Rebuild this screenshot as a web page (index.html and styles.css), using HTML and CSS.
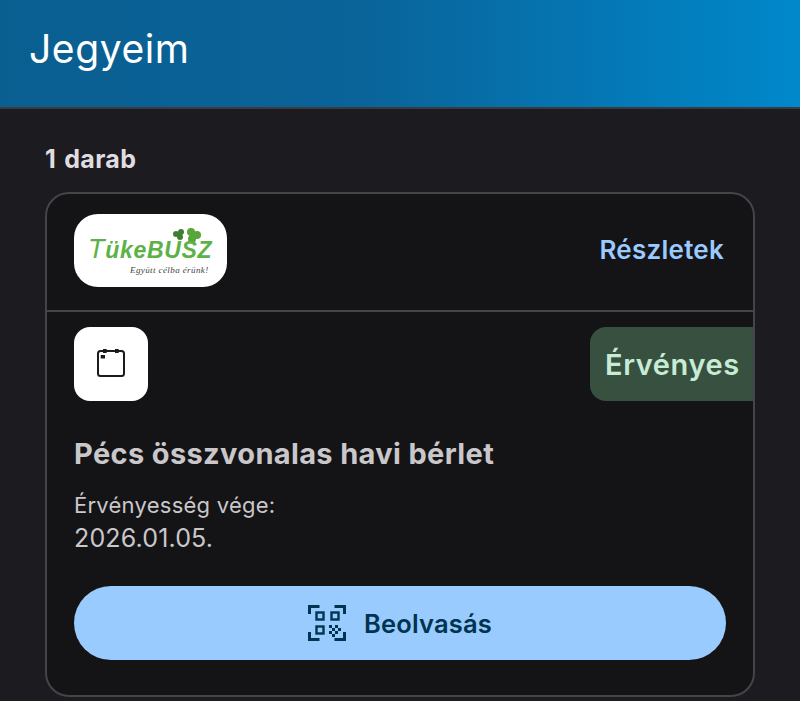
FILE: index.html
```html
<!DOCTYPE html>
<html lang="hu">
<head>
<meta charset="utf-8">
<title>Jegyeim</title>
<link rel="stylesheet" href="styles.css">
</head>
<body>
<header class="topbar"><h1 class="topbar-title">Jegyeim</h1></header>
<main class="content">
  <div class="count">1 darab</div>
  <section class="card">
    <div class="card-head">
      <div class="logo">
        <svg class="clover" viewBox="0 0 32 20" width="32" height="20">
          <g fill="#3f7d32"><circle cx="5" cy="7" r="3"/><circle cx="10" cy="5" r="3"/><circle cx="9" cy="10" r="3"/></g>
          <g fill="#58a53c"><circle cx="20" cy="5" r="4"/><circle cx="26" cy="8" r="4"/><circle cx="21" cy="12" r="4"/></g>
        </svg>
        <div class="logo-name"><span class="logo-t">T</span>ükeBUSZ</div>
        <div class="logo-tag">Együtt célba érünk!</div>
      </div>
      <a class="details">Részletek</a>
    </div>
    <div class="card-body">
      <div class="status-row">
        <div class="cal-box">
          <svg viewBox="0 0 28 30" width="28" height="30" fill="none">
            <rect x="1" y="1.900" width="26" height="25.200" rx="2.500" stroke="#1b1b1f" stroke-width="2"/>
            <rect x="6" y="0" width="3.700" height="4" fill="#1b1b1f"/>
            <rect x="18" y="0" width="3.700" height="4" fill="#1b1b1f"/>
            <rect x="3.700" y="6" width="4.300" height="3.500" fill="#1b1b1f"/>
          </svg>
        </div>
        <div class="badge">Érvényes</div>
      </div>
      <h2 class="ticket-name">Pécs összvonalas havi bérlet</h2>
      <div class="valid-label">Érvényesség vége:</div>
      <div class="valid-date">2026.01.05.</div>
      <button class="scan">
        <svg viewBox="0 0 38 38" width="38" height="38" fill="none" stroke="#00344f" stroke-width="3">
          <path d="M1.500 10V2.500h10M26.500 2.500h10V10M1.500 28v7.500h10M26.500 35.500h10V28"/>
          <rect x="8.500" y="8.500" width="7" height="7" stroke-width="2.400"/>
          <rect x="23.500" y="8.500" width="7" height="7" stroke-width="2.400"/>
          <rect x="8.500" y="22.500" width="7" height="7" stroke-width="2.400"/>
          <g fill="#00344f" stroke="none">
            <rect x="21" y="21" width="3" height="3"/><rect x="27" y="21" width="3" height="3"/>
            <rect x="24" y="24" width="3" height="3"/><rect x="30" y="24" width="3" height="3"/>
            <rect x="21" y="27" width="3" height="3"/><rect x="27" y="27" width="3" height="3"/>
            <rect x="24" y="30" width="3" height="3"/>
          </g>
        </svg>
        <span>Beolvasás</span>
      </button>
    </div>
  </section>
</main>
</body>
</html>
```
FILE: styles.css
```css
* { box-sizing: border-box; }
html, body { margin: 0; height: 100%; overflow: hidden; }
body {
  background: #1c1b1f;
  color: #e6e1e5;
  font-family: "Inter", "Liberation Sans", sans-serif;
}
.topbar {
  height: 109px;
  padding: 27px 29px 0;
  background: linear-gradient(90deg, #0a5f91 0%, #0a6399 45%, #0088cb 100%);
  border-bottom: 2px solid #3a3b40;
}
.topbar-title {
  margin: 0;
  font-size: 39px;
  line-height: 44px;
  letter-spacing: 0.6px;
  font-weight: 400;
  color: #fff;
}
.content { padding: 36px 45px 0; }
.count {
  font-size: 25px;
  line-height: 28px;
  letter-spacing: 0.3px;
  word-spacing: 2px;
  font-weight: 700;
  color: #e0dde1;
}
.card {
  margin-top: 19px;
  height: 505px;
  background: #141416;
  border: 2px solid #43454b;
  border-radius: 24px;
}
.card-head {
  height: 118px;
  padding: 20px 29px 0 27px;
  display: flex;
  justify-content: space-between;
  align-items: flex-start;
  border-bottom: 2px solid #43454b;
}
.logo {
  position: relative;
  width: 153px;
  height: 73px;
  background: #fff;
  border-radius: 24px;
  overflow: hidden;
}
.clover { position: absolute; left: 97px; top: 13px; }
.logo-name {
  position: absolute;
  left: 14px;
  top: 24px;
  font-family: "Liberation Sans", sans-serif;
  font-style: italic;
  font-weight: 700;
  font-size: 23px;
  line-height: 22px;
  letter-spacing: 0.7px;
  color: #5cb246;
  white-space: nowrap;
}
.logo-t { font-size: 27px; font-weight: 400; line-height: 22px; }
.logo-tag {
  position: absolute;
  left: 56px;
  top: 51px;
  font-family: "Liberation Serif", serif;
  font-style: italic;
  font-size: 9px;
  line-height: 10px;
  letter-spacing: 0.4px;
  color: #444;
  white-space: nowrap;
}
.details {
  margin-top: 21px;
  font-size: 26px;
  line-height: 30px;
  letter-spacing: 0.25px;
  font-weight: 600;
  color: #9acbff;
}
.card-body { padding: 15px 0 0 27px; }
.status-row {
  display: flex;
  justify-content: space-between;
  align-items: flex-start;
}
.cal-box {
  width: 74px;
  height: 74px;
  background: #fff;
  border-radius: 16px;
  display: flex;
  align-items: center;
  justify-content: center;
}
.badge {
  width: 163px;
  height: 74px;
  padding-left: 15px;
  display: flex;
  align-items: center;
  background: #38503f;
  color: #c7ecd6;
  font-size: 29px;
  letter-spacing: 0.6px;
  font-weight: 600;
  border-radius: 16px 0 0 16px;
}
.ticket-name {
  margin: 35px 0 0;
  font-size: 29px;
  line-height: 36px;
  letter-spacing: 0.35px;
  font-weight: 700;
  color: #cac7cb;
}
.valid-label {
  margin-top: 18px;
  font-size: 22px;
  line-height: 30px;
  letter-spacing: 0.25px;
  color: #cac7cb;
}
.valid-date {
  margin-top: 2px;
  font-size: 25px;
  line-height: 32px;
  letter-spacing: 0.15px;
  color: #cac7cb;
}
.scan {
  margin-top: 32px;
  width: 652px;
  height: 74px;
  display: flex;
  align-items: center;
  justify-content: center;
  gap: 18px;
  border: 0;
  border-radius: 37px;
  background: #9acbff;
  color: #00344f;
  font-family: inherit;
  font-size: 25.5px;
  letter-spacing: 0.2px;
  font-weight: 600;
}
```
